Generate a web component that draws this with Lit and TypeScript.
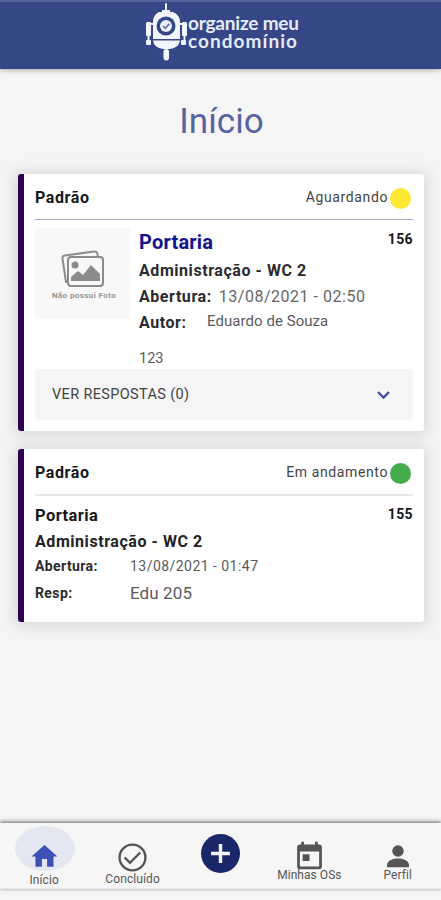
import { LitElement, html, css, svg } from "lit";
import { customElement, property } from "lit/decorators.js";

@customElement("brand-header")
class BrandHeader extends LitElement {
  static styles = css`
    :host {
      display: flex;
      height: 69px;
      box-sizing: border-box;
      background: #354786;
      border-top: 2px solid #53659b;
      padding: 1px 0 0 145px;
      box-shadow: 0 1px 5px rgba(0, 0, 0, 0.32);
      position: relative;
      z-index: 1;
    }
    .mark { width: 42px; height: 60px; flex: none; }
    .name {
      display: flex;
      flex-direction: column;
      padding-top: 11px;
      margin-left: 1px;
      color: #e6ebfa;
      font: 700 19px/18px Lato, sans-serif;
      white-space: nowrap;
    }
    .top { letter-spacing: -0.2px; }
    .bottom { letter-spacing: 1.050px; }
  `;
  render() {
    return html`
      <svg class="mark" viewBox="0 0 42 60">
        <g fill="#f2f6ff">
          <rect x="20" y="0" width="2" height="9" rx="1" />
          <path d="M17 7h8v2h3q7 3 7 10v17H8V19q0-7 6-10h3z" />
          <path d="M8 37.500h27q-1 7.500-10 8.500h-7q-9-1-10-8.500z" />
          <rect x="18.500" y="46" width="5.500" height="11.500" rx="2.700" />
          <rect x="1" y="19" width="5" height="14" rx="1" />
          <rect x="2.500" y="32" width="2" height="7" />
          <rect x="1" y="37" width="5" height="5" rx="1" />
          <rect x="37" y="19" width="5" height="14" rx="1" />
          <rect x="38.500" y="32" width="2" height="7" />
          <rect x="36" y="37" width="5" height="5" rx="1" />
          <rect x="5" y="20" width="4" height="2" />
          <rect x="34" y="20" width="4" height="2" />
        </g>
        <circle cx="21" cy="23" r="9.500" fill="#354786" />
        <circle cx="21" cy="23" r="6" fill="#e9effc" />
        <path d="m18 23 2.300 2.300 4-4.600" fill="none" stroke="#5c6da8" stroke-width="1.600" />
      </svg>
      <div class="name"><span class="top">organize meu</span><span class="bottom">condomínio</span></div>
    `;
  }
}

@customElement("order-card")
class OrderCard extends LitElement {
  @property() status = "";
  @property() tone = "waiting";
  static styles = css`
    :host {
      display: block;
      box-sizing: border-box;
      background: #fff;
      border-left: 6px solid #300052;
      border-radius: 3px;
      padding: 0 11px;
      box-shadow: 0 1px 14px 4px rgba(0, 0, 0, 0.11);
    }
    .head { display: flex; align-items: center; height: 45px; border-bottom: 1px solid #a9aed0; }
    .head.progress { border-bottom: 2px solid #e6e6ea; }
    .kind { font-weight: 700; font-size: 16px; color: #17171b; letter-spacing: 0.6px; flex: 1; line-height: 44px; padding-top: 2px; }
    .state { font-size: 14px; color: #444; letter-spacing: 0.62px; margin-right: 2px; }
    .dot { width: 21px; height: 21px; border-radius: 50%; background: #fee833; margin: 3px 2px 0 0; }
    .progress .dot { background: #43ad4b; }
  `;
  render() {
    return html`
      <div class="head ${this.tone}">
        <span class="kind">Padrão</span><span class="state">${this.status}</span><i class="dot"></i>
      </div>
      <slot></slot>
    `;
  }
}

@customElement("tab-bar")
class TabBar extends LitElement {
  static styles = css`
    :host {
      display: grid;
      grid-template-columns: repeat(5, 88.4px);
      height: 65px;
      background: #f6f6f7;
      box-shadow: 0 -1px 4px rgba(0, 0, 0, 0.62);
      border-bottom: 1px solid #e8eaec;
      color: #555;
      font-size: 12px;
      line-height: 14px;
    }
    .tab { display: flex; flex-direction: column; align-items: center; position: relative; }
    .label { white-space: nowrap; position: relative; }
    .halo { position: absolute; left: 15px; top: 3px; width: 60px; height: 45px; border-radius: 50%; background: #e4e6f2; }
    svg { position: relative; display: block; }
    .home { margin-top: 18px; }
    .done { margin-top: 18px; }
    .plus { margin-top: 11px; }
    .agenda { margin-top: 16px; }
    .user { margin-top: 17px; }
    .a { margin-top: 1px; letter-spacing: 0.1px; }
    .b { margin-top: -2px; letter-spacing: 0.1px; }
    .c { margin-top: -4px; letter-spacing: 0.05px; }
    .d { margin-top: -4px; letter-spacing: 0.1px; }
  `;
  icon(cls: string, size: number, body: unknown) {
    return html`<svg class=${cls} width=${size} height=${size} viewBox="0 0 24 24">${body}</svg>`;
  }
  render() {
    return html`
      <div class="tab"><i class="halo"></i>
        ${this.icon("home", 31, svg`<path fill="#3d50b5" d="M10 20v-6h4v6h5v-8h3L12 3 2 12h3v8z"/>`)}
        <span class="label a">Início</span></div>
      <div class="tab">
        ${this.icon("done", 33, svg`<circle cx="12" cy="12" r="9.400" fill="none" stroke="#555" stroke-width="1.700"/><path d="m6.300 12 3.900 3.900 7.400-7.500" fill="none" stroke="#555" stroke-width="1.700"/>`)}
        <span class="label b">Concluído</span></div>
      <div class="tab">
        ${this.icon("plus", 39, svg`<circle cx="12" cy="12" r="12" fill="#1a2869"/><path d="M12 6.200v11.600M6.200 12h11.600" stroke="#f5f6fc" stroke-width="2.100"/>`)}</div>
      <div class="tab">
        ${this.icon("agenda", 33, svg`<path fill="#555" d="M19 4h-1V2h-2v2H8V2H6v2H5a2 2 0 0 0-2 2v14a2 2 0 0 0 2 2h14a2 2 0 0 0 2-2V6a2 2 0 0 0-2-2zm0 16H5V9h14zM7 11h5v5H7z"/>`)}
        <span class="label c">Minhas OSs</span></div>
      <div class="tab">
        ${this.icon("user", 32, svg`<circle cx="12" cy="8.300" r="4.300" fill="#555"/><path fill="#555" d="M3.800 20.500v-2c0-3.400 5-4.700 8.200-4.700s8.200 1.300 8.200 4.700v2z"/>`)}
        <span class="label d">Perfil</span></div>
    `;
  }
}

@customElement("app-root")
class AppRoot extends LitElement {
  static styles = css`
    :host {
      display: flex;
      flex-direction: column;
      height: 900px;
      width: 441px;
      overflow: hidden;
      background: #f5f5f5;
      font-family: Roboto, sans-serif;
      color: #2b2b2f;
    }
    h1 { margin: 32px 0 0; padding-left: 2px; text-align: center; font-weight: 400; font-size: 35px; line-height: 41px; color: #5663a0; }
    .list { display: flex; flex-direction: column; gap: 18px; margin: 32px 17px 0 18px; flex: 1; }
    .first { height: 257px; }
    .second { height: 173px; }
    .body { display: flex; padding-top: 8px; height: 149px; box-sizing: border-box; }
    .photo { width: 95px; height: 91px; background: #f8f8f8; display: flex; flex-direction: column; align-items: center; margin-right: 9px; flex: none; }
    .photo svg { margin: 22px 0 0 0; }
    .photo span { font-size: 8px; font-weight: 700; line-height: 9px; color: #949494; margin: 3px 0 0 3px; white-space: nowrap; letter-spacing: 0.4px; }
    .info { flex: 1; display: flex; flex-direction: column; }
    .row { display: flex; white-space: nowrap; line-height: 26px; }
    .lead { height: 30px; }
    .num { margin-left: auto; font-weight: 700; font-size: 14px; line-height: 22px; letter-spacing: 0.35px; color: #17171b; }
    .place { font-weight: 700; font-size: 20px; color: #14148a; letter-spacing: 0.2px; line-height: 28px; }
    .unit, .open { font-weight: 700; font-size: 16px; letter-spacing: 0.56px; }
    .date { font-size: 16px; color: #66666a; margin-left: 7px; letter-spacing: 0.52px; }
    .author { font-size: 15px; line-height: 23px; color: #5a5a5e; margin-left: 20.500px; letter-spacing: 0.05px; }
    .note { font-size: 14.500px; color: #5a5a5e; line-height: 20px; margin-top: 13px; }
    .answers { display: flex; align-items: center; justify-content: space-between; height: 51px; background: #f5f5f5; border-radius: 3px; padding: 0 22px 0 17px; font-size: 14.500px; letter-spacing: 0.35px; color: #444; line-height: 20px; }
    .detail { display: flex; flex-direction: column; padding-top: 7px; }
    .detail .unit { color: #222226; }
    .name2 { font-weight: 700; font-size: 16.500px; color: #17171b; letter-spacing: 0.4px; }
    .key { width: 95px; font-weight: 700; font-size: 14px; letter-spacing: 0.4px; }
    .val { font-size: 14px; color: #5a5a5e; letter-spacing: 0.46px; }
    .edu { font-size: 17px; color: #5a5a5e; letter-spacing: 0.1px; }
    .r3 { line-height: 23px; }
    .r4 { line-height: 31px; }
    tab-bar { margin-bottom: 11px; }
  `;
  render() {
    return html`
      <brand-header></brand-header>
      <h1>Início</h1>
      <div class="list">
        <order-card class="first" status="Aguardando">
          <div class="body">
            <div class="photo">
              <svg width="44" height="38" viewBox="0 0 44 38" fill="none" stroke="#8b8b8b" stroke-width="2">
                <path d="M7 32H5L1.500 8.500Q1 6 4 5.500L33 1.500q3-.5 3.500 2.500l.5 3" />
                <rect x="7" y="7" width="35" height="29" rx="3" />
                <circle cx="14" cy="15" r="3.500" fill="#8b8b8b" stroke="none" />
                <path d="M10 31v-4l7-6 5 4 8-10 9 9v7z" fill="#8b8b8b" stroke="none" />
              </svg>
              <span>Não possui Foto</span>
            </div>
            <div class="info">
              <div class="row lead"><span class="place">Portaria</span><span class="num">156</span></div>
              <div class="row"><span class="unit">Administração - WC 2</span></div>
              <div class="row"><span class="open">Abertura:</span><span class="date">13/08/2021 - 02:50</span></div>
              <div class="row"><span class="open">Autor:</span><span class="author">Eduardo de Souza</span></div>
              <div class="note">123</div>
            </div>
          </div>
          <div class="answers">
            <span>VER RESPOSTAS (0)</span>
            <svg width="15" height="10" viewBox="0 0 15 10"><path d="m2 2 5.500 5.500L13 2" fill="none" stroke="#3a4fa0" stroke-width="2.300" /></svg>
          </div>
        </order-card>
        <order-card class="second" status="Em andamento" tone="progress">
          <div class="detail">
            <div class="row"><span class="name2">Portaria</span><span class="num">155</span></div>
            <div class="row"><span class="unit">Administração - WC 2</span></div>
            <div class="row r3"><span class="key">Abertura:</span><span class="val">13/08/2021 - 01:47</span></div>
            <div class="row r4"><span class="key">Resp:</span><span class="edu">Edu 205</span></div>
          </div>
        </order-card>
      </div>
      <tab-bar></tab-bar>
    `;
  }
}
